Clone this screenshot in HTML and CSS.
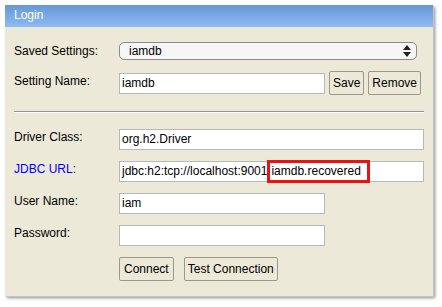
FILE: index.html
```html
<!DOCTYPE html>
<html>
<head>
<meta charset="utf-8">
<link rel="stylesheet" href="styles.css">
</head>
<body>
<div class="panel">
  <div class="title">Login</div>
  <div class="content">
    <div class="row r-saved">
      <div class="label">Saved Settings:</div>
      <div class="select"><span>iamdb</span>
        <svg class="arrows" width="8" height="12" viewBox="0 0 8 12"><path d="M4 0 L8 5 L0 5 Z M0 7 L8 7 L4 12 Z" fill="#222"/></svg>
      </div>
    </div>
    <div class="row r-name">
      <div class="label">Setting Name:</div>
      <div class="field short">iamdb</div>
      <div class="btn">Save</div>
      <div class="btn">Remove</div>
    </div>
    <div class="rule"></div>
    <div class="row r-driver">
      <div class="label">Driver Class:</div>
      <div class="field long">org.h2.Driver</div>
    </div>
    <div class="row r-url">
      <div class="label"><span class="link">JDBC URL</span>:</div>
      <div class="field long">jdbc:h2:tcp://localhost:9001<span class="mark">iamdb.recovered</span></div>
    </div>
    <div class="row r-user">
      <div class="label">User Name:</div>
      <div class="field short">iam</div>
    </div>
    <div class="row r-pass">
      <div class="label">Password:</div>
      <div class="field short"></div>
    </div>
    <div class="row r-buttons">
      <div class="label"></div>
      <div class="btn first">Connect</div>
      <div class="btn gap">Test Connection</div>
    </div>
  </div>
</div>
</body>
</html>
```
FILE: styles.css
```css
html, body {
  margin: 0;
  padding: 0;
  background: #ffffff;
}
body {
  padding: 5px;
  font-family: "Liberation Sans", Arial, sans-serif;
  font-size: 12px;
  color: #000;
}
.panel {
  width: 428px;
  height: 291px;
  background: #ece9d8;
  box-shadow: 1px 1px 0 #c4c4c4, 2px 2px 3px rgba(0,0,0,0.45);
  display: flex;
  flex-direction: column;
}
.title {
  height: 22px;
  line-height: 21px;
  padding-left: 9px;
  color: #fff;
  background: linear-gradient(#6897d6, #8dbaf2);
  font-size: 12px;
}
.content {
  padding: 15px 9px 0 9px;
  display: flex;
  flex-direction: column;
}
.row {
  display: flex;
  align-items: center;
}
.label {
  width: 105px;
  flex: none;
  align-self: flex-start;
  line-height: 14px;
  padding-top: 1px;
}
.link { color: #0000ff; }
.select {
  position: relative;
  width: 296px;
  height: 16px;
  border: 1px solid #8c8c8c;
  border-radius: 5px;
  background: #f6f6f6;
  line-height: 16px;
}
.select span { padding-left: 9px; }
.arrows {
  position: absolute;
  right: 5px;
  top: 2px;
}
.field {
  height: 19px;
  line-height: 19px;
  border: 1px solid #b8b8b8;
  background: #fff;
  padding-left: 2px;
  white-space: nowrap;
  display: flex;
  align-items: center;
}
.short { width: 202px; }
.long { width: 302px; }
.mark {
  flex: none;
  box-sizing: border-box;
  width: 103px;
  height: 23px;
  line-height: 17px;
  border: 3px solid #ee1111;
  padding-left: 1px;
  background: #fff;
}
.btn {
  height: 22px;
  line-height: 22px;
  padding: 0 3px;
  border: 1px solid #9b9a8a;
  border-radius: 2px;
  background: #ece9d8;
  margin-left: 4px;
}
.btn.first { margin-left: 0; padding: 0 4px; }
.btn.gap { margin-left: 10px; }
.r-saved .label { padding-top: 2px; }
.r-name { margin-top: 11px; }
.r-name .label { padding-top: 3px; }
.rule {
  margin: 16px 0 16px 0;
  height: 0;
  border-top: 1px solid #929292;
  border-bottom: 1px solid #fff;
}
.r-url, .r-user, .r-pass, .r-buttons { margin-top: 11px; }
```
